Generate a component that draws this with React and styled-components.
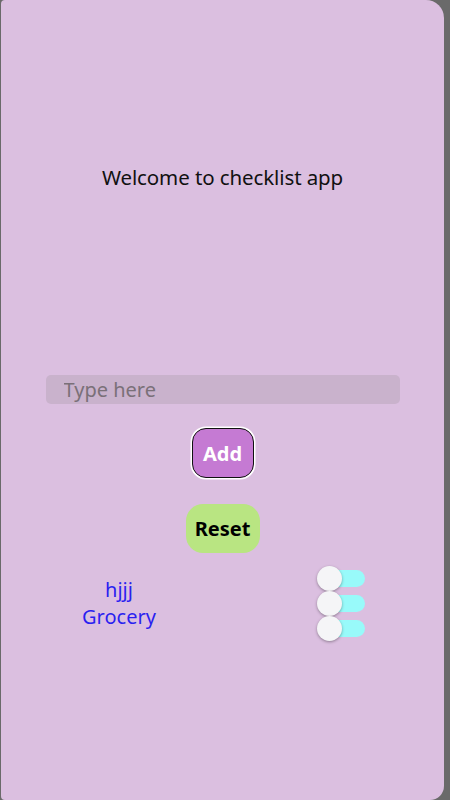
import React from "react";
import styled, { createGlobalStyle } from "styled-components";

const Global = createGlobalStyle`
  html, body { margin: 0; padding: 0; background: #6a6a6a; }
  body { font-family: "Noto Sans", "Open Sans", sans-serif; }
`;

const Frame = styled.div`
  width: 450px;
  height: 800px;
  padding-left: 1px;
  box-sizing: border-box;
  overflow: hidden;
`;

const Card = styled.main`
  width: 443px;
  height: 800px;
  background: #dbbfe0;
  border-radius: 4px 18px 14px 4px;
  display: flex;
  flex-direction: column;
  align-items: center;
`;

const Title = styled.h1`
  margin: 163px 0 0;
  font-size: 20.5px;
  font-weight: 400;
  color: #111;
  line-height: 28px;
  letter-spacing: -0.1px;
`;

const Input = styled.input`
  margin-top: 184px;
  width: 354px;
  height: 29px;
  box-sizing: border-box;
  border: none;
  border-radius: 5px;
  background: #c9b2cc;
  padding: 0 0 0 18px;
  font-family: inherit;
  font-size: 20px;
  color: #333;
  outline: none;
  &::placeholder { color: #7a7078; }
`;

const Button = styled.button`
  font-family: inherit;
  font-weight: 700;
  font-size: 20px;
  cursor: pointer;
  background: ${(p) => p.$bg};
  color: ${(p) => p.$fg};
  border: ${(p) => (p.$outlined ? "1px solid #111" : "none")};
  box-shadow: ${(p) => (p.$outlined ? "0 0 0 1.5px #fff" : "none")};
  width: ${(p) => p.$w}px;
  height: ${(p) => p.$h}px;
  border-radius: ${(p) => p.$r}px;
  margin-top: ${(p) => p.$mt}px;
  padding: 0;
`;

const List = styled.section`
  margin-top: 13px;
  width: 443px;
  display: grid;
  grid-template-columns: 236px 207px;
`;

const Names = styled.div`
  display: flex;
  flex-direction: column;
  align-items: center;
  padding-top: 10px;
`;

const Name = styled.span`
  color: #2b1ff0;
  font-size: 20px;
  line-height: 27px;
`;

const Switches = styled.div`
  display: flex;
  flex-direction: column;
  padding-left: 80px;
`;

const Track = styled.div`
  position: relative;
  width: 48px;
  height: 25px;
  &::before {
    content: "";
    position: absolute;
    left: 14px;
    top: 4px;
    width: 34px;
    height: 17px;
    border-radius: 9px;
    background: #98fafa;
  }
`;

const Thumb = styled.div`
  position: absolute;
  left: 0;
  top: 0;
  width: 25px;
  height: 25px;
  border-radius: 50%;
  background: #f5f5f7;
  box-shadow: 0 1px 3px rgba(0, 0, 0, 0.35);
`;

function Switch() {
  return (
    <Track>
      <Thumb />
    </Track>
  );
}

export default function App() {
  return (
    <>
      <Global />
      <Frame>
        <Card>
          <Title>Welcome to checklist app</Title>
          <Input placeholder="Type here" />
          <Button $bg="#c57ad3" $fg="#fff" $outlined $w={62} $h={50} $r={14} $mt={24}>
            Add
          </Button>
          <Button $bg="#b9e582" $fg="#000" $w={74} $h={49} $r={17} $mt={26}>
            Reset
          </Button>
          <List>
            <Names>
              <Name>hjjj</Name>
              <Name>Grocery</Name>
            </Names>
            <Switches>
              <Switch />
              <Switch />
              <Switch />
            </Switches>
          </List>
        </Card>
      </Frame>
    </>
  );
}
